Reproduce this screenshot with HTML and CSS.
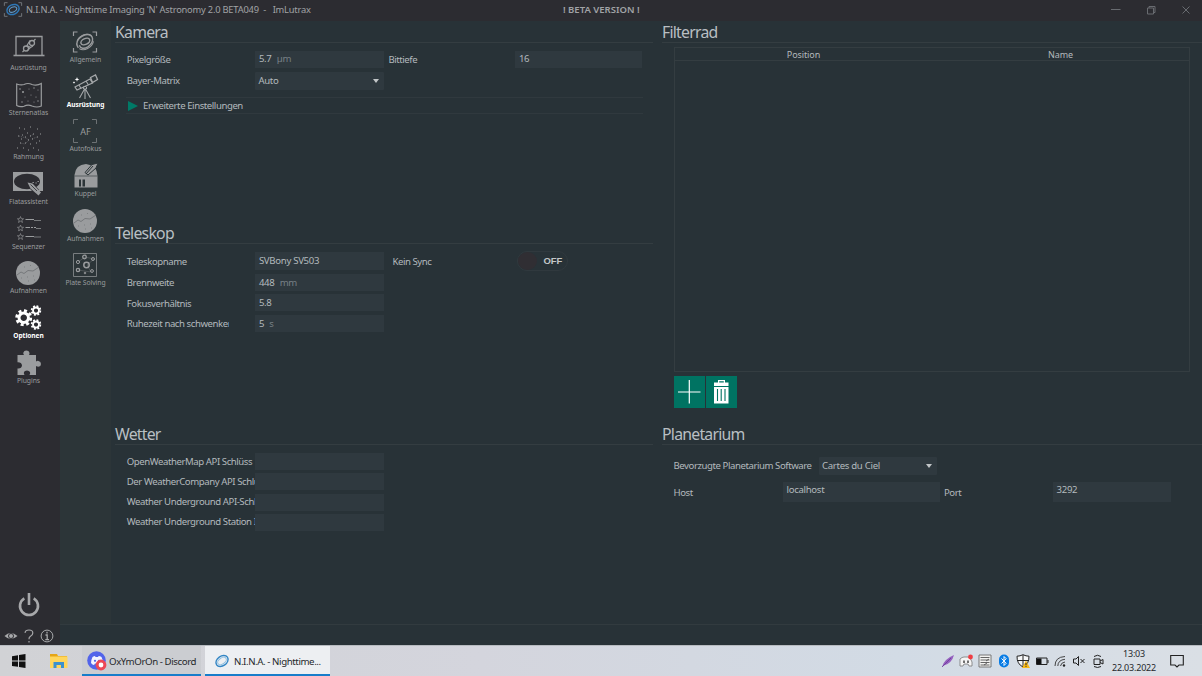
FILE: index.html
```html
<!DOCTYPE html>
<html lang="de">
<head>
<meta charset="utf-8">
<title>N.I.N.A.</title>
<link rel="stylesheet" href="styles.css">
</head>
<body>
<svg class="defs" width="0" height="0" aria-hidden="true">
  <symbol id="galaxy" viewBox="0 0 26 26">
    <g fill="none" stroke="currentColor">
      <path d="M1.500 7V3H5.500M20.500 3H24.500V7M24.500 19V23H20.500M5.500 23H1.500V19" stroke-width="1.200"/>
      <g transform="rotate(-25 13 13)">
        <path d="M4.500 15.500C3 8 12 5 18 7C24 9.500 22 17 14 18.500C9 19.300 6 17 6.500 13.500" stroke-width="1.400"/>
        <path d="M5 16.500C8 21.500 17 21 21 16M21.500 10C18 4.500 10 5 6 9" stroke-width="1"/>
        <ellipse cx="13.500" cy="12.700" rx="4.700" ry="2.900" stroke-width="1.500"/>
      </g>
    </g>
  </symbol>
  <symbol id="moon" viewBox="0 0 26 26">
    <circle cx="13" cy="13" r="12" fill="currentColor"/>
    <g fill="none" stroke="#65686b" stroke-width=".7"><path d="M2 15L6 12L9 13.500L13 10.500L18 11L24 7"/><path d="M6 18h.8M12 17h.8M18 16h.8M9 7h.8M15 5.500h.8M13 21h.8M19 20h.8"/></g>
  </symbol>
  <symbol id="gear" viewBox="-10 -10 20 20">
    <circle r="5.400" fill="none" stroke="currentColor" stroke-width="3.400"/>
    <circle r="8" fill="none" stroke="currentColor" stroke-width="3.400" stroke-dasharray="3.400 2.883"/>
  </symbol>
  <symbol id="star" viewBox="0 0 10 10"><path d="M5 .8L6.200 3.800L9.400 4L6.900 6L7.800 9.200L5 7.400L2.200 9.200L3.100 6L.6 4L3.800 3.800Z" fill="none" stroke="currentColor" stroke-width=".9"/></symbol>
</svg>

<div class="app">
  <header class="titlebar">
    <svg class="title-logo" viewBox="0 0 22 18"><g fill="none"><path d="M1.500 5V1.500H5M17 1.500H20.500V5M20.500 13V16.500H17M5 16.500H1.500V13" stroke="#777c80"/><g transform="rotate(-25 11 9)"><ellipse cx="11" cy="9" rx="7" ry="5.200" stroke="#2e78b8" stroke-width="1.600"/><ellipse cx="11" cy="9" rx="4.300" ry="2.700" stroke="#6199c7" stroke-width="1.200"/></g></g></svg>
    <span class="title-text">N.I.N.A. - Nighttime Imaging 'N' Astronomy 2.0 BETA049 &nbsp;- &nbsp; ImLutrax</span>
    <strong class="beta">! BETA VERSION !</strong>
    <div class="window-controls">
      <svg viewBox="0 0 10 10"><path d="M0 4.500H9.500" stroke="currentColor"/></svg>
      <svg viewBox="0 0 10 10"><path d="M1.500 3H7.500V9H1.500ZM3 3V1.500H9V7.500H7.500" fill="none" stroke="currentColor"/></svg>
      <svg viewBox="0 0 10 10"><path d="M1.500 1.500L8.500 8.500M8.500 1.500L1.500 8.500" stroke="currentColor"/></svg>
    </div>
  </header>

  <div class="workspace">
    <nav class="nav main-nav">
      <div class="nav-item"><svg class="wide" viewBox="0 0 32 26"><g fill="none" stroke="currentColor"><path d="M3 18V-.5H29V18" stroke-width="1.300"/><path d="M.5 18.500H31.500" stroke-width="1.600"/><circle cx="13" cy="11.500" r="2.500" stroke-width="1.300"/><circle cx="19" cy="6" r="2.500" stroke-width="1.300"/><path d="M9.500 15L11.300 13.300M14 14L17.500 10.500L14 8.500L17 3.500M20.500 4L22.500 2M17.500 10.500L20 9" stroke-width="1.200"/></g></svg><span>Ausrüstung</span></div>
      <div class="nav-item"><svg viewBox="0 0 26 26"><path d="M.7 2Q5 3.500 8 2.500Q12 .5 16 2.500Q21 4 25.300 1.500V24Q21 26 16 24Q12 22 8 24.200Q4 25.500 .7 23.500Z" fill="none" stroke="currentColor" stroke-width="1.200"/><g fill="currentColor"><circle cx="4" cy="7" r=".8"/><circle cx="7" cy="10" r="1"/><circle cx="9" cy="15" r=".5"/><circle cx="13" cy="7" r=".5"/><circle cx="18" cy="6" r=".7"/><circle cx="22" cy="8" r=".5"/><circle cx="15" cy="13" r=".5"/><circle cx="20" cy="15" r=".6"/><circle cx="6" cy="20" r=".7"/><circle cx="12" cy="19" r=".5"/><circle cx="18" cy="20" r=".5"/><circle cx="22" cy="19" r=".7"/></g></svg><span>Sternenatlas</span></div>
      <div class="nav-item"><svg viewBox="0 0 26 26"><path d="M3 2h1M8 3h1M14 1h1M21 3h1M24 8h1M11 7h1M2 10h1M6 9h1M9 11h1M14 10h1M17 8h1M21 11h1M5 13h1M12 14h1M16 13h1M23 15h1M4 17h1M9 17h1M14 18h1M20 17h1M1 22h1M7 22h1M12 24h1M17 22h1M22 24h1" stroke="currentColor" stroke-width="1"/><path d="M3 10L10 12L13 14L9 18L4 17M14 10L18 8M16 13L21 11" fill="none" stroke="currentColor" stroke-width=".4" stroke-dasharray="1 1"/></svg><span>Rahmung</span></div>
      <div class="nav-item"><svg class="wide" viewBox="0 0 32 26"><path d="M1 1H31V20H1Z" fill="currentColor"/><ellipse cx="15" cy="10.500" rx="13" ry="7.800" fill="#2c2c31"/><path d="M19 14.500L25 21" stroke="#2c2c31" stroke-width="6"/><path d="M15.500 11.500L20.500 12.500L29 21.500L26.500 24.500L18.500 17.500Z" fill="currentColor"/><path d="M18.500 13.500L25 20" stroke="#2c2c31" stroke-width=".8"/><path d="M20.500 11.500h1.400M23.500 12h1.200M25.500 10.500h1.400" stroke="currentColor"/></svg><span>Flatassistent</span></div>
      <div class="nav-item"><svg viewBox="0 0 26 26"><use href="#star" x="1" y="0" width="7" height="7"/><use href="#star" x="1" y="8.500" width="7" height="7"/><use href="#star" x="1" y="17" width="7" height="7"/><path d="M9.500 3.500H18M9.500 11.500H14M15 11.500H17M18 11.500H20M9.500 20.500H18" stroke="currentColor"/><path d="M18 4.500H25M20 12.500H25M18 21H25" stroke="currentColor" stroke-width=".7"/></svg><span>Sequenzer</span></div>
      <div class="nav-item"><svg viewBox="0 0 26 26"><use href="#moon" width="26" height="26"/></svg><span>Aufnahmen</span></div>
      <div class="nav-item active"><svg viewBox="0 0 26 26"><use href="#gear" x="0" y="4" width="17.500" height="17.500"/><use href="#gear" x="15.500" y="0" width="11" height="11"/><use href="#gear" x="15.500" y="14" width="11" height="11"/></svg><span>Optionen</span></div>
      <div class="nav-item"><svg viewBox="0 0 26 26"><path d="M1.500 5H8Q7 3.500 7.300 2.800Q8 .5 10.300 .5Q13 .5 13.500 2.800Q13.700 4 13 5H20V11.500Q21.500 10.500 22.500 11Q25 11.500 25 14Q25 16.500 22.500 16.700Q21 16.700 20 16V25H13.500Q14.500 23 14 22Q13 20.500 11 20.500Q8.500 20.500 8 22Q7.500 23.500 8.500 25H1.500V18.500Q5.500 19 6 15.500Q5.500 12 1.500 12.300Z" fill="currentColor"/></svg><span>Plugins</span></div>
      <div class="nav-bottom">
        <svg class="power" viewBox="0 0 22 24"><g fill="none" stroke="currentColor" stroke-width="2.600"><path d="M6.300 5.300A9 9 0 1 0 15.700 5.300M11 0V12"/></g></svg>
        <div class="tools">
          <svg viewBox="0 0 14 14"><path d="M.5 7Q6.500 1 13.500 7Q6.500 13 .5 7Z" fill="currentColor"/><circle cx="7" cy="7" r="2.500" fill="none" stroke="#2c2c31"/></svg>
          <svg viewBox="0 0 14 14"><path d="M3 3.800Q3.500 1 7 1Q10.800 1 10.800 4Q10.800 6 8.500 7.200Q6.800 8.300 7 10.200M7 12V13.500" fill="none" stroke="currentColor" stroke-width="1.200"/></svg>
          <svg viewBox="0 0 14 14"><g fill="none" stroke="currentColor"><circle cx="7" cy="7" r="5.900"/><path d="M7 2.700V4.400M5.500 6H7.200V10.700M5.300 10.700H9" stroke-width="1.300"/></g></svg>
        </div>
      </div>
    </nav>

    <div class="content">
      <div class="content-body">
        <nav class="nav sub-nav">
          <div class="nav-item"><svg viewBox="0 0 26 26"><use href="#galaxy" width="26" height="26"/></svg><span>Allgemein</span></div>
          <div class="nav-item active"><svg class="grey" viewBox="0 0 26 26"><g fill="none" stroke="currentColor"><path d="M3 13L18 5L20.500 9L5 16Z" stroke-width="1.200"/><path d="M18.500 3.500L23.500 1L25.500 5.500L20.500 8.500Z" stroke-width="1.300"/><path d="M7 11L9 14.500M14 7L16.500 11M13 14V17M12 16L7.500 24M13 15V25M14 16L18.500 24" stroke-width="1.100"/><circle cx="13" cy="14" r="1.700"/></g><path d="M5 3L5.600 4.800L7.400 5.400L5.600 6L5 7.800L4.400 6L2.600 5.400L4.400 4.800ZM2 7.300l.4.800.8.400-.8.400-.4.800-.4-.8-.8-.4.800-.4Z" fill="#fff"/></svg><span>Ausrüstung</span></div>
          <div class="nav-item"><svg viewBox="0 0 26 26"><path d="M1.500 6V1.500H6M20 1.500H24.500V6M24.500 20V24.500H20M6 24.500H1.500V20" fill="none" stroke="#6d7274"/><text class="af" x="13.500" y="16.500" text-anchor="middle">AF</text></svg><span>Autofokus</span></div>
          <div class="nav-item"><svg viewBox="0 0 26 26"><path d="M1.500 24.500V12Q2.500 1.500 13 1Q24 2 24.500 13V24.500Z" fill="currentColor"/><path d="M12 9.500L19 1.500L25 0L23 5L15 12Z" fill="currentColor" stroke="#2c3538" stroke-width="1"/><path d="M1.500 13H24.500" stroke="#2c3538" stroke-width=".6"/><path d="M13 11L20 3" stroke="#2c3538"/><path d="M6 16.500H8V23.500H6ZM9.500 16.500H12V23.500H9.500Z" fill="#2c3538"/></svg><span>Kuppel</span></div>
          <div class="nav-item"><svg viewBox="0 0 26 26"><use href="#moon" width="26" height="26"/></svg><span>Aufnahmen</span></div>
          <div class="nav-item"><svg viewBox="0 0 26 26"><g fill="none" stroke="currentColor"><path d="M1.500 1.500H24.500V24.500H1.500Z" stroke-width=".7"/><path d="M6 10L13 5L22 7L15 13L19 20L6 18" stroke-width=".3"/><circle cx="12.500" cy="5" r="1.800" stroke-width="1.300"/><circle cx="21" cy="7" r="1.500"/><circle cx="6" cy="10" r="1.600"/><circle cx="14.500" cy="13" r="2.700" stroke-width="1.500"/><circle cx="6" cy="18" r="1.700" stroke-width="1.200"/><circle cx="20" cy="19" r="1.400"/><circle cx="13" cy="21" r=".8"/></g></svg><span>Plate Solving</span></div>
        </nav>

        <main class="settings">
          <section class="panel">
            <h2>Kamera</h2>
            <div class="form camera">
              <label>Pixelgröße</label><div class="field">5.7 <i>µm</i></div><label class="second">Bittiefe</label><div class="field">16</div>
              <label>Bayer-Matrix</label><div class="field combo">Auto</div>
            </div>
            <div class="expander"><b></b>Erweiterte Einstellungen</div>
          </section>
          <section class="panel tall">
            <h2>Filterrad</h2>
            <div class="filter-table"><div class="table-head"><span>Position</span><span>Name</span></div></div>
            <div class="buttons">
              <button aria-label="Hinzufügen"><svg viewBox="0 0 31 32"><path d="M4 16H26.500M15.300 4V27.500" stroke="#fff" stroke-width="1.200"/></svg></button>
              <button aria-label="Löschen"><svg viewBox="0 0 31 32"><path d="M8 8V6.500H12V4H19V6.500H22.500V10H8ZM13.200 6.500H17.800V5.200H13.200Z" fill="#fff" fill-rule="evenodd"/><path d="M8 11H22.500V27.500H8Z" fill="#fff"/><path d="M11.500 13V25M15.200 13V25M19 13V25" stroke="#007362" stroke-width="1.100"/></svg></button>
            </div>
          </section>
          <section class="panel">
            <h2>Teleskop</h2>
            <div class="form telescope">
              <label>Teleskopname</label><div class="field">SVBony SV503</div><label class="second">Kein Sync</label><div class="toggle"><b></b>OFF</div>
              <label>Brennweite</label><div class="field">448 <i>mm</i></div>
              <label>Fokusverhältnis</label><div class="field">5.8</div>
              <label class="short">Ruhezeit nach schwenken</label><div class="field">5 <i>s</i></div>
            </div>
          </section>
          <section class="panel">
            <h2>Wetter</h2>
            <div class="form weather">
              <label>OpenWeatherMap API Schlüss</label><div class="field"></div>
              <label>Der WeatherCompany API Schlü</label><div class="field"></div>
              <label>Weather Underground API-Schl</label><div class="field"></div>
              <label>Weather Underground Station I</label><div class="field"></div>
            </div>
          </section>
          <section class="panel">
            <h2>Planetarium</h2>
            <div class="planet-row software"><label>Bevorzugte Planetarium Software</label><div class="field combo">Cartes du Ciel</div></div>
            <div class="planet-row host"><label>Host</label><div class="field">localhost</div><label>Port</label><div class="field">3292</div></div>
          </section>
        </main>
      </div>
      <div class="statusbar"></div>
    </div>
  </div>

  <footer class="taskbar">
    <svg class="start" viewBox="0 0 14 14"><path d="M0 2.200L6 1.300V6.600H0ZM7 1.100L13.500 0V6.600H7ZM0 7.500H6V12.700L0 11.900ZM7 7.500H13.500V14L7 12.900Z" fill="#111"/></svg>
    <svg class="folder" viewBox="0 0 18 16"><path d="M0 1H7L8 3H17V14H0Z" fill="#e5a516"/><path d="M0 3.500H17.500V15H0Z" fill="#ffd65c"/><path d="M3.500 15V9H14V15H11V12H6.500V15Z" fill="#3b91cf"/></svg>
    <div class="task discord">
      <svg viewBox="0 0 20 20"><circle cx="9.500" cy="9.500" r="9.300" fill="#5264ea"/><path d="M5.500 6Q7 5 8 5L8.500 6H11L11.700 5Q13 5 14.500 6Q16 9 16 12Q14 14 12.500 14L11.700 12.500H8L7 14Q5.500 13.800 4 12Q4 9 5.500 6Z" fill="#f3f4ff"/><circle cx="8" cy="9.800" r="1.100" fill="#5264ea"/><circle cx="12" cy="9.800" r="1.100" fill="#5264ea"/><circle cx="14" cy="14" r="3.900" fill="#fff" stroke="#ed4856" stroke-width="3"/></svg>
      <span>OxYmOrOn - Discord</span>
    </div>
    <div class="task nina">
      <svg viewBox="0 0 16 16"><g transform="rotate(-35 8 8)" fill="none"><ellipse cx="8" cy="8" rx="6.600" ry="4.800" stroke="#3285c4" stroke-width="1.400"/><ellipse cx="8" cy="8" rx="4.800" ry="3" stroke="#8abde0"/></g></svg>
      <span>N.I.N.A. - Nighttime...</span>
    </div>
    <div class="tray">
      <svg viewBox="0 0 14 14"><path d="M1 13Q3 5 13 1Q11 9 3 11.500Z" fill="#9560bf"/><path d="M1 13L10 4" stroke="#643291" stroke-width=".7"/></svg>
      <svg viewBox="0 0 14 14"><path d="M1 5Q3 3 5 3L9 3Q12 4 13 8V12H10L9 10H5L4 12H1Z" fill="#f5f5f5" stroke="#777" stroke-width=".8"/><path d="M5 6.500V9M9 6.500V9" stroke="#444" stroke-width="1.500"/><circle cx="11.500" cy="3" r="2.400" fill="#ef3c43"/></svg>
      <svg viewBox="0 0 14 14"><path d="M1 1H13V13H1Z" fill="#f2f2f0" stroke="#777"/><path d="M2.500 3.500H11.500M2.500 6H11.500M2.500 8.500H11.500M2.500 11H11.500M8 7L11 5M6 11L9 9" stroke="#555" stroke-width=".9"/></svg>
      <svg viewBox="0 0 14 14"><rect x="2" y=".5" width="10" height="13" rx="5" fill="#087ce5"/><path d="M4.500 4.500L9.200 9.300L7 11.500V2.500L9.200 4.700L4.500 9.500" fill="none" stroke="#fff"/></svg>
      <svg viewBox="0 0 14 14"><path d="M7 .7Q10 2.200 13 2.200Q13.200 10 7 13Q.8 10 1 2.200Q4 2.200 7 .7Z" fill="#f6f7f8" stroke="#222"/><path d="M7 1V13M1 6.500H13" stroke="#222"/><path d="M10 6.500L14 14H6Z" fill="#f8b817"/><path d="M10 9V11.300M10 12.200V13" stroke="#222"/></svg>
      <svg viewBox="0 0 14 14"><path d="M1.500 4H12V10.500H1.500ZM13 6V9" fill="none" stroke="#222"/><path d="M2 4.500H6.500V10H2Z" fill="#111"/></svg>
      <svg viewBox="0 0 14 14"><g fill="none" stroke="#444"><path d="M2 12Q2 3 12 2.500M4.800 12Q5 6 12 5.300M7.500 12Q8 8.500 12 8"/></g><circle cx="11" cy="11.500" r="1.200" fill="#222"/></svg>
      <svg viewBox="0 0 14 14"><path d="M1.500 5H4L6.500 2.500V11.500L4 9H1.500ZM8.500 5L12.500 9M12.500 5L8.500 9" fill="none" stroke="#222"/></svg>
      <svg viewBox="0 0 14 14"><path d="M3 5H9V10.500H3ZM9 7L12 5.500V10L9 8.500M3 2.500Q6.500 0 10 2.500M3 12.500Q6.500 14.500 10 12.500" fill="none" stroke="#222"/></svg>
    </div>
    <div class="clock"><span>13:03</span><span>22.03.2022</span></div>
    <svg class="notify" viewBox="0 0 14 14"><path d="M.7 1.500H13.300V11H9L7 13L5 11H.7Z" fill="none" stroke="#222" stroke-width="1.100"/></svg>
  </footer>
</div>
</body>
</html>
```
FILE: styles.css
```css
* { box-sizing: border-box; }
body { margin: 0; font-family: "Noto Sans", "Open Sans", sans-serif; font-size: 9.6px; letter-spacing: -.43px; color: #b3b9bd; background: #283237; overflow: hidden; }
svg { display: block; flex: none; overflow: visible; }
.defs { position: absolute; }
.app { width: 1202px; height: 676px; display: flex; flex-direction: column; }
.titlebar { height: 21px; flex: none; background: #2c2c31; display: grid; grid-template-columns: 26px 537px 1fr auto; align-items: center; color: #a1a3a6; padding-bottom: 2px; white-space: nowrap; }
.title-logo { width: 20px; height: 17px; margin-left: 3px; }
.title-text { font-size: 9.3px; letter-spacing: -.2px; }
.beta { font-size: 9.5px; letter-spacing: 0; font-weight: 600; }
.window-controls { display: flex; gap: 25px; padding-right: 11px; color: #686b70; }
.window-controls svg { width: 10px; height: 10px; }
.workspace { height: 624px; flex: none; display: flex; }
.nav { flex: none; display: flex; flex-direction: column; align-items: center; color: #9a9c9e; }
.main-nav { width: 60px; background: #2c2c31; padding: 11px 3px 0 0; }
.sub-nav { width: 51px; background: #2c3538; padding-top: 3px; }
.nav-item { height: 44.7px; flex: none; padding-top: 5px; display: flex; flex-direction: column; align-items: center; font-size: 6.8px; letter-spacing: -.07px; line-height: 9px; white-space: nowrap; }
.nav-item svg { width: 26px; height: 26px; }
.nav-item svg.wide { width: 32px; }
.nav-item.active { color: #fff; font-weight: 700; font-size: 6.6px; }
.nav-item svg.grey { color: #a5a8aa; }
.af { font-size: 9px; letter-spacing: 0; font-weight: 400; fill: #9a9c9e; }
.nav-bottom { margin-top: auto; padding-bottom: 2px; display: flex; flex-direction: column; align-items: center; gap: 12px; color: #a7a8aa; }
.power { width: 22px; height: 24px; }
.tools { display: flex; gap: 4px; }
.tools svg { width: 14px; height: 14px; }
.content { flex: 1; display: flex; flex-direction: column; }
.content-body { height: 603px; display: flex; }
.statusbar { height: 21px; border-top: 1px solid #323b3f; background: #283237; }
.settings { flex: 1; display: grid; grid-template-columns: 538px 540px; column-gap: 9px; grid-template-rows: 201px 201px 201px; padding-left: 4px; }
.panel.tall { grid-row: span 2; grid-column: 2; }
h2 { margin: 0; height: 22px; border-bottom: 1px solid #343d41; font-size: 15.8px; line-height: 22px; font-weight: 400; color: #b9bfc3; letter-spacing: -.75px; }
.field { background: #2f393f; height: 17px; line-height: 16px; padding-left: 3.500px; white-space: nowrap; letter-spacing: -.3px; }
.field i { font-style: normal; color: #778086; margin-left: 3px; }
.combo { height: 18px; display: flex; align-items: center; justify-content: space-between; padding: 0 5px 0 3px; border-radius: 1px; }
.combo::after { content: ""; border: 3.500px solid transparent; border-top: 4px solid #c2c6c8; border-bottom: 0; }
.form { display: grid; grid-template-columns: 129px 129px 131px 127px; padding: 8px 0 0 11.400px; align-items: center; }
.form label { white-space: nowrap; overflow: hidden; line-height: 16px; grid-column: 1; padding-left: .4px; }
.form .field { grid-column: 2; }
.form .second { grid-column: 3; padding-left: 4px; }
.form .second + * { grid-column: 4; }
.camera { grid-template-rows: 17px 19px; row-gap: 3px; }
.camera .combo { align-self: center; }
.expander { margin: 7px 10px 0 11px; height: 17px; border: 1px solid #30393e; border-width: 1px 0; display: flex; align-items: center; gap: 5px; padding-left: 2px; }
.expander b { border: 5.500px solid transparent; border-left: 10px solid #007a67; border-right: 0; }
.telescope { grid-template-rows: 18px 17px 17px 17px; row-gap: 3.700px; }
.telescope .field { align-self: stretch; height: auto; line-height: 17.500px; }
.telescope label { padding-top: 1.500px; line-height: 17px; }
.telescope .second { padding-left: 8px; }
.telescope .short { width: 102.500px; padding-top: 0; }
.toggle { width: 51px; height: 20px; margin: -1px 0 -1px 2px; border: 1px solid #30393e; border-radius: 10px; display: flex; align-items: center; gap: 6px; padding-bottom: 1px; color: #c3c6c8; font: 700 9.500px "Liberation Sans", sans-serif; letter-spacing: -.1px; }
.toggle b { width: 19px; height: 18px; border-radius: 50%; background: #302e33; }
.weather { padding-top: 8px; grid-template-rows: repeat(4, 17px); row-gap: 3.300px; }
.weather label { line-height: 15px; padding-bottom: 1px; }
.filter-table { margin: 4px 12px 0 12px; height: 325px; border: 1px solid #343d41; }
.table-head { height: 13px; border-bottom: 1px solid #343d41; display: grid; grid-template-columns: 257px 257px; text-align: center; font-size: 9px; letter-spacing: -.1px; line-height: 13px; }
.buttons { display: flex; gap: 1px; margin: 4px 0 0 12px; }
button { border: 0; padding: 0; width: 31px; height: 32px; background: #007362; }
button svg { width: 31px; height: 32px; }
.planet-row { display: grid; padding-left: 11.500px; }
.planet-row label { white-space: nowrap; }
.software { grid-template-columns: 145.500px 118px; padding-top: 12px; align-items: center; }
.software label { padding-bottom: 1px; }
.host { grid-template-columns: 109.500px 157px 113px 118px; padding-top: 7px; align-items: center; }
.host .field { height: 20px; }
.host .field + label { padding-left: 4px; }
.taskbar { height: 31px; flex: none; background: linear-gradient(90deg, #d1d2d5, #d4d5dd 40%, #d2dbe5 75%, #dadfe5); display: flex; align-items: center; color: #26282b; font-size: 9.700px; letter-spacing: -.42px; border-top: 1px solid #b7bbc0; white-space: nowrap; }
.start { width: 14px; height: 14px; margin-left: 12px; }
.folder { width: 18px; height: 16px; margin: 0 14px 0 24px; }
.task { height: 30px; display: flex; align-items: center; padding-top: 2px; border-bottom: 2px solid #187dca; }
.discord { width: 119px; gap: 2px; padding-left: 5px; background: #cbcdd1; }
.discord svg { width: 20px; height: 20px; }
.nina { width: 125px; margin-left: 4px; padding-left: 9px; gap: 4px; background: #edeff2; }
.nina svg { width: 16px; height: 16px; }
.tray { margin-left: auto; display: flex; gap: 4.800px; }
.tray svg { width: 14px; height: 14px; }
.clock { width: 58px; display: flex; flex-direction: column; align-items: center; line-height: 14px; font-size: 9px; letter-spacing: -.2px; }
.notify { width: 14px; height: 14px; margin: 0 18px 0 7px; }
```
